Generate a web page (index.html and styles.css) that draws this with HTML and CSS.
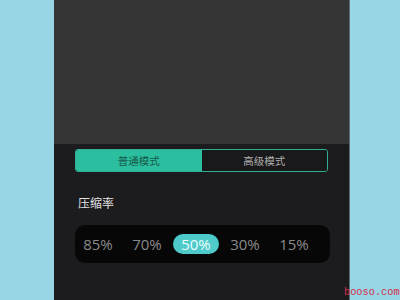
FILE: index.html
```html
<!DOCTYPE html>
<html lang="zh">
<head>
<meta charset="utf-8">
<link rel="stylesheet" href="styles.css">
</head>
<body>
<div class="stage">
  <div class="phone">
    <div class="preview"></div>
    <div class="panel">
      <div class="seg">
        <div class="seg-item active">普通模式</div>
        <div class="seg-item">高级模式</div>
      </div>
      <div class="label">压缩率</div>
      <div class="rates">
        <span class="rate">85%</span>
        <span class="rate">70%</span>
        <span class="rate sel">50%</span>
        <span class="rate">30%</span>
        <span class="rate">15%</span>
      </div>
    </div>
  </div>
  <div class="mark">booso.com</div>
</div>
</body>
</html>
```
FILE: styles.css
```css
html, body {
  margin: 0;
  padding: 0;
}
body {
  width: 400px;
  height: 300px;
  overflow: hidden;
  background: #98d5e5;
  font-family: "Noto Sans CJK SC", "Noto Sans", sans-serif;
}
.stage {
  position: relative;
  width: 400px;
  height: 300px;
  display: flex;
  padding-left: 54px;
  box-sizing: border-box;
}
.phone {
  width: 296px;
  height: 300px;
  display: flex;
  flex-direction: column;
  border-right: 1px solid #5a6e74;
  box-sizing: border-box;
}
.preview {
  height: 144px;
  background: #353535;
}
.panel {
  flex: 1;
  background: #1c1b1d;
  padding: 5px 21px 0 21px;
}
.seg {
  display: flex;
  width: 253px;
  height: 23px;
  border: 1px solid #2fae93;
  border-radius: 3px;
  box-sizing: border-box;
  overflow: hidden;
}
.seg-item {
  flex: 1;
  display: flex;
  align-items: center;
  justify-content: center;
  font-size: 10.5px;
  color: #b0b0b0;
  background: #19181a;
}
.seg-item.active {
  background: #2bbf9f;
  color: #17574a;
}
.label {
  margin-top: 23px;
  margin-left: 3px;
  font-size: 12px;
  line-height: 16px;
  color: #e2e2e2;
}
.rates {
  margin-top: 14px;
  width: 255px;
  height: 38px;
  background: #070707;
  border-radius: 10px;
  display: flex;
  align-items: center;
  padding-left: 0;
  box-sizing: border-box;
  gap: 3px;
}
.rate {
  font-family: "Open Sans", "Noto Sans", sans-serif;
  font-size: 15px;
  color: #8a8a8a;
  width: 46px;
  height: 20px;
  line-height: 20px;
  text-align: center;
  border-radius: 10px;
}
.rate.sel {
  background: #4fcaca;
  color: #e8ffff;
}
.mark {
  position: absolute;
  left: 344px;
  top: 285px;
  font-family: "Liberation Mono", monospace;
  font-size: 10.3px;
  line-height: 14px;
  color: #d4304a;
}
```
